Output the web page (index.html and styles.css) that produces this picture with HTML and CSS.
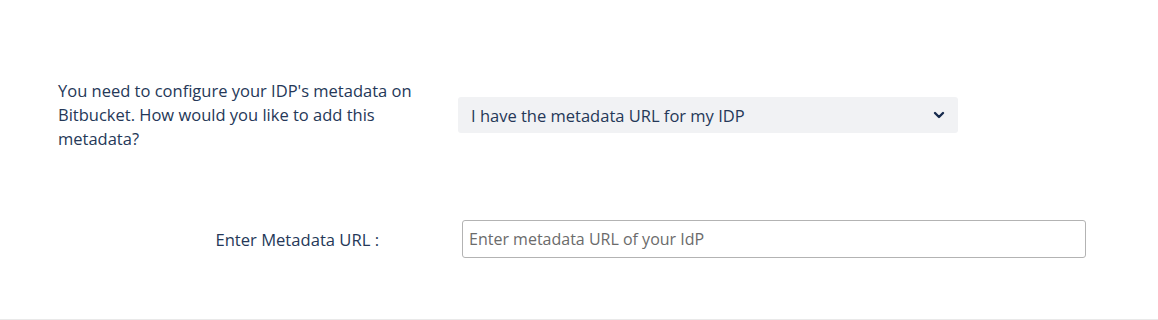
FILE: index.html
```html
<!DOCTYPE html>
<html>
<head>
<meta charset="utf-8">
<link rel="stylesheet" href="styles.css">
</head>
<body>
<div class="page">
  <div class="row row-select">
    <p class="question">You need to configure your IDP's metadata on Bitbucket. How would you like to add this metadata?</p>
    <div class="select">
      <span>I have the metadata URL for my IDP</span>
      <svg class="chev" width="12" height="8" viewBox="0 0 12 8"><path d="M2 2 L6 6 L10 2" fill="none" stroke="#172b4d" stroke-width="2.4" stroke-linecap="round" stroke-linejoin="round"/></svg>
    </div>
  </div>
  <div class="row row-url">
    <label class="url-label">Enter Metadata URL :</label>
    <input class="url-input" type="text" placeholder="Enter metadata URL of your IdP">
  </div>
</div>
</body>
</html>
```
FILE: styles.css
```css
html, body {
  margin: 0;
  padding: 0;
  background: #fff;
}
body {
  font-family: "Open Sans", "Noto Sans", sans-serif;
  color: #253858;
  font-size: 16.5px;
}
.page {
  height: 319px;
  border-bottom: 1px solid #e9e9e9;
  display: flex;
  flex-direction: column;
}
.row-select {
  display: flex;
  align-items: center;
  padding: 79px 0 0 58px;
}
.question {
  margin: 0;
  width: 370px;
  line-height: 24px;
}
.select {
  margin-left: 30px;
  width: 500px;
  height: 36px;
  box-sizing: border-box;
  background: #f1f2f4;
  border-radius: 3px;
  display: flex;
  align-items: center;
  justify-content: space-between;
  padding: 0 13px 0 13px;
  color: #253858;
}
.row-url {
  display: flex;
  align-items: center;
  margin-top: 69px;
}
.url-label {
  width: 379px;
  text-align: right;
  font-size: 16.6px;
  color: #253858;
}
.url-input {
  margin-left: 83px;
  width: 624px;
  height: 38px;
  box-sizing: border-box;
  border: 1px solid #b3b3b3;
  border-radius: 3px;
  padding: 0 6px;
  font-family: "Open Sans", "Noto Sans", sans-serif;
  font-size: 16px;
  color: #253858;
  outline: none;
}
.url-input::placeholder {
  color: #6b6b6b;
}
```
